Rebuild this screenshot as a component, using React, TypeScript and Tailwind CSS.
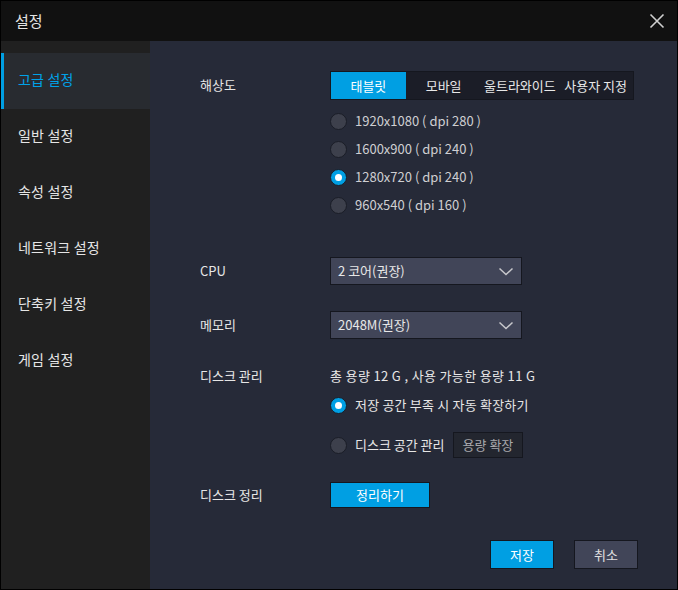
import { useState } from "react"

const font = { fontFamily: '"Noto Sans CJK KR", "Noto Sans", sans-serif' }

const menu = ["고급 설정", "일반 설정", "속성 설정", "네트워크 설정", "단축키 설정", "게임 설정"]
const tabs = [
  { label: "태블릿", w: "w-[75px]" },
  { label: "모바일", w: "w-[76px]" },
  { label: "울트라와이드", w: "w-[77px]" },
  { label: "사용자 지정", w: "w-[75px]" },
]
const resolutions = ["1920x1080 ( dpi 280 )", "1600x900 ( dpi 240 )", "1280x720 ( dpi 240 )", "960x540 ( dpi 160 )"]

function Radio({ checked }: { checked: boolean }) {
  return checked ? (
    <span className="w-[17px] h-[17px] rounded-full bg-[#009fe3] border border-[#1a1d27] flex items-center justify-center shrink-0">
      <span className="w-[7px] h-[7px] rounded-full bg-white" />
    </span>
  ) : (
    <span className="w-[17px] h-[17px] rounded-full bg-[#3d404c] border border-[#1a1d27] shrink-0" />
  )
}

function Select({ value }: { value: string }) {
  return (
    <div className="w-[192px] h-[28px] bg-[#414558] border border-[#15171f] flex items-center justify-between pl-[7px] pr-[7px] text-[13px] text-[#e8e8e8]">
      <span>{value}</span>
      <svg width="16" height="9" viewBox="0 0 16 9" fill="none">
        <path d="M1.5 1.5 L8 7.5 L14.5 1.5" stroke="#c8c8cc" strokeWidth="1.5" />
      </svg>
    </div>
  )
}

export default function App() {
  const [active, setActive] = useState(0)
  const [tab, setTab] = useState(0)
  const [res, setRes] = useState(2)
  const [disk, setDisk] = useState(0)

  return (
    <div style={font} className="w-[678px] h-[590px] border border-black flex flex-col bg-[#111111] overflow-hidden">
      {/* Title bar */}
      <div className="h-[40px] bg-[#111111] flex items-center justify-between pl-[14px] pr-[12px] shrink-0">
        <span className="text-[15px] text-[#e4e4e4]">설정</span>
        <svg width="16" height="16" viewBox="0 0 16 16" fill="none">
          <path d="M1.5 1.5 L14.5 14.5 M14.5 1.5 L1.5 14.5" stroke="#d0d0d0" strokeWidth="1.6" />
        </svg>
      </div>

      <div className="flex flex-1 min-h-0">
        {/* Sidebar */}
        <div className="w-[149px] bg-[#202020] pt-[12px] shrink-0">
          {menu.map((m, i) => (
            <button
              key={m}
              onClick={() => setActive(i)}
              className={`w-full h-[56px] flex items-center pl-[14px] pb-[4px] text-[14px] text-left border-l-[3px] tracking-[0.2px] ${
                active === i
                  ? "bg-[#282b30] border-[#009fe3] text-[#00a2e8]"
                  : "border-transparent text-[#e6e6e6]"
              }`}
            >
              {m}
            </button>
          ))}
        </div>

        {/* Content */}
        <div className="flex-1 bg-[#262a38] pl-[50px] pt-[30px] pr-[39px] flex flex-col text-[13px] text-[#e6e6e6]">
          {/* Resolution */}
          <div className="flex">
            <div className="w-[130px] h-[29px] flex items-center pb-[2px]">해상도</div>
            <div>
              <div className="flex border border-[#15171f] bg-[#1b1d27] h-[29px] w-[304px]">
                {tabs.map((t, i) => (
                  <button
                    key={t.label}
                    onClick={() => setTab(i)}
                    className={`${t.w} flex items-center justify-center text-[13px] whitespace-nowrap ${
                      tab === i ? "bg-[#009fe3] text-white" : "text-[#e8e8e8]"
                    }`}
                  >
                    {t.label}
                  </button>
                ))}
              </div>
              <div className="mt-[7px] flex flex-col">
                {resolutions.map((r, i) => (
                  <button key={r} onClick={() => setRes(i)} className="h-[28px] flex items-center gap-[8px] text-[#cfcfd2]">
                    <Radio checked={res === i} />
                    <span>{r}</span>
                  </button>
                ))}
              </div>
            </div>
          </div>

          {/* CPU */}
          <div className="flex items-center mt-[38px]">
            <div className="w-[130px]">CPU</div>
            <Select value="2 코어(권장)" />
          </div>

          {/* Memory */}
          <div className="flex items-center mt-[26px]">
            <div className="w-[130px]">메모리</div>
            <Select value="2048M(권장)" />
          </div>

          {/* Disk management */}
          <div className="flex mt-[27px]">
            <div className="w-[130px] h-[20px] flex items-center">디스크 관리</div>
            <div className="flex flex-col">
              <div className="h-[20px] flex items-center tracking-[0.35px]">총 용량 12 G , 사용 가능한 용량 11 G</div>
              <button onClick={() => setDisk(0)} className="h-[28px] mt-[5px] flex items-center gap-[8px]">
                <Radio checked={disk === 0} />
                <span className="tracking-[0.2px]">저장 공간 부족 시 자동 확장하기</span>
              </button>
              <div className="h-[28px] mt-[12px] flex items-center gap-[8px]">
                <button onClick={() => setDisk(1)} className="flex items-center gap-[8px]">
                  <Radio checked={disk === 1} />
                  <span>디스크 공간 관리</span>
                </button>
                <button className="h-[26px] px-[9px] bg-[#23262f] border border-[#15171f] text-[#a8a8ac]">용량 확장</button>
              </div>
            </div>
          </div>

          {/* Disk cleanup */}
          <div className="flex items-center mt-[23px]">
            <div className="w-[130px]">디스크 정리</div>
            <button className="w-[100px] h-[26px] bg-[#009fe3] border border-[#15171f] text-white">정리하기</button>
          </div>

          {/* Footer */}
          <div className="flex justify-end gap-[20px] mt-[32px]">
            <button className="w-[64px] h-[29px] bg-[#009fe3] border border-[#15171f] text-white">저장</button>
            <button className="w-[64px] h-[29px] bg-[#414558] border border-[#15171f] text-[#e0e0e0]">취소</button>
          </div>
        </div>
      </div>
    </div>
  )
}
